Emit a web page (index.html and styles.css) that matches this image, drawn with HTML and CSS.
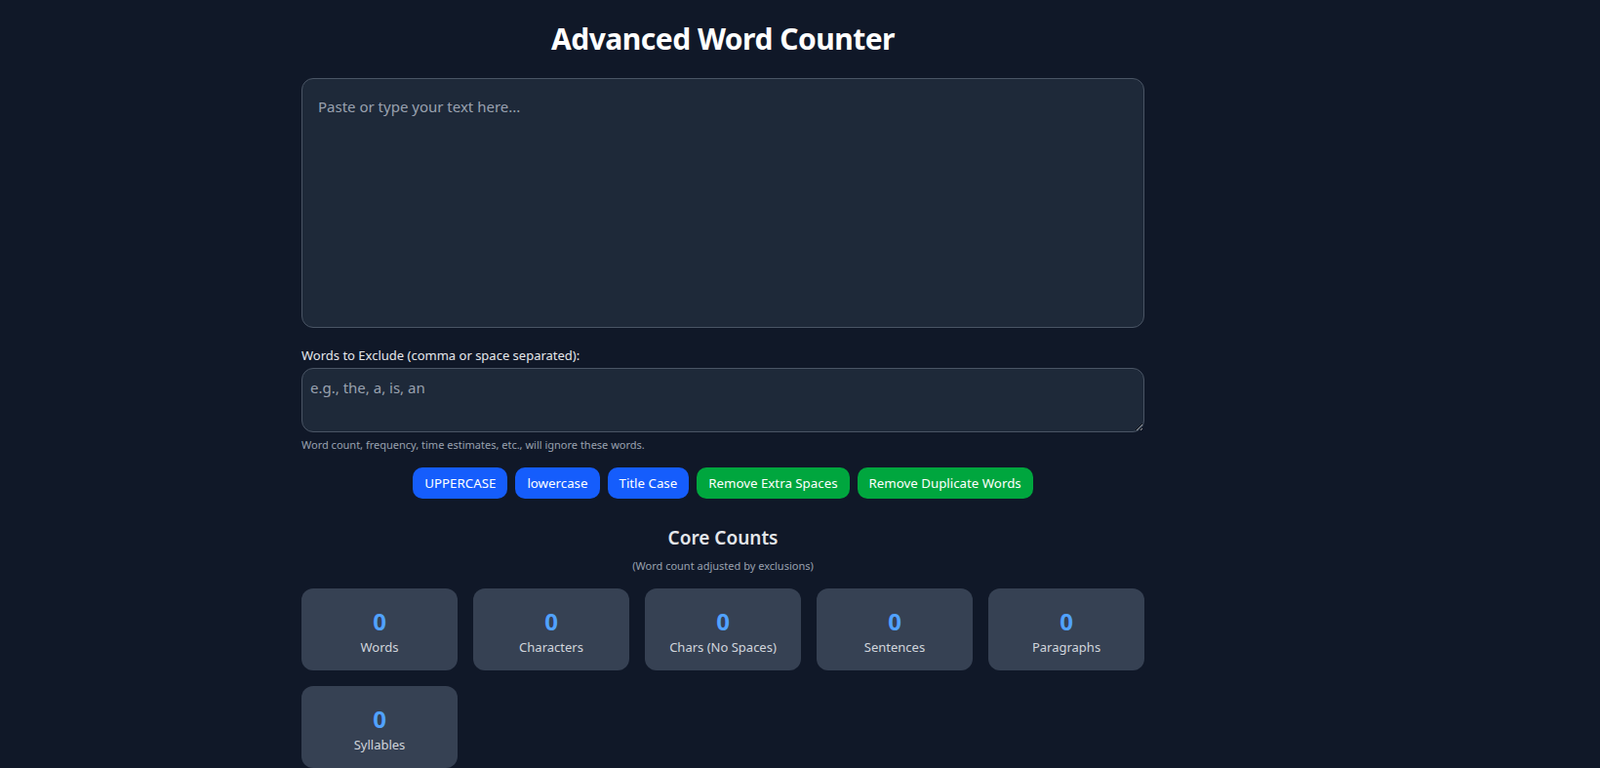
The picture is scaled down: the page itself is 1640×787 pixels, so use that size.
FILE: index.html
```html
<!DOCTYPE html>
<html lang="en">
<head>
<meta charset="utf-8">
<title>Advanced Word Counter</title>
<link rel="stylesheet" href="styles.css">
</head>
<body>
<div class="page">
  <main class="container">
    <h1 class="title">Advanced Word Counter</h1>
    <textarea class="main-input" placeholder="Paste or type your text here..."></textarea>
    <div class="exclude">
      <label class="exclude-label" for="exclude">Words to Exclude (comma or space separated):</label>
      <textarea id="exclude" class="exclude-input" rows="2" placeholder="e.g., the, a, is, an"></textarea>
      <p class="hint">Word count, frequency, time estimates, etc., will ignore these words.</p>
    </div>
    <div class="actions">
      <button class="btn btn-blue">UPPERCASE</button>
      <button class="btn btn-blue">lowercase</button>
      <button class="btn btn-blue">Title Case</button>
      <button class="btn btn-green">Remove Extra Spaces</button>
      <button class="btn btn-green">Remove Duplicate Words</button>
    </div>
    <section class="core">
      <h2 class="section-title">Core Counts</h2>
      <p class="section-sub">(Word count adjusted by exclusions)</p>
      <div class="grid">
        <div class="card"><div class="num">0</div><div class="label">Words</div></div>
        <div class="card"><div class="num">0</div><div class="label">Characters</div></div>
        <div class="card"><div class="num">0</div><div class="label">Chars (No Spaces)</div></div>
        <div class="card"><div class="num">0</div><div class="label">Sentences</div></div>
        <div class="card"><div class="num">0</div><div class="label">Paragraphs</div></div>
        <div class="card"><div class="num">0</div><div class="label">Syllables</div></div>
      </div>
    </section>
  </main>
</div>
</body>
</html>
```

FILE: styles.css
```css
* { box-sizing: border-box; }
html, body {
  margin: 0;
  padding: 0;
  background: #101828;
  color: #e5e7eb;
  font-family: "Noto Sans", "Open Sans", sans-serif;
}
.page {
  padding-left: 309px;
  padding-top: 22px;
}
.container {
  width: 864px;
}
.title {
  margin: 0 0 22px;
  font-size: 30px;
  line-height: 36px;
  font-weight: 700;
  text-align: center;
  color: #ffffff;
  letter-spacing: -0.5px;
}
.main-input {
  display: block;
  width: 100%;
  height: 256px;
  margin: 0;
  padding: 16px 16px;
  background: #1e2939;
  border: 1px solid #4a5565;
  border-radius: 12px;
  color: #e5e7eb;
  font-family: inherit;
  font-size: 15px;
  line-height: 24px;
  resize: none;
  outline: none;
}
.main-input::placeholder,
.exclude-input::placeholder { color: #99a1af; opacity: 1; }
.exclude {
  margin-top: 18px;
}
.exclude-label {
  display: block;
  font-size: 13px;
  line-height: 20px;
  color: #e5e7eb;
  margin-bottom: 3px;
}
.exclude-input {
  display: block;
  width: 100%;
  height: 66px;
  margin: 0;
  padding: 7px 8px 8px;
  background: #1e2939;
  border: 1px solid #4a5565;
  border-radius: 12px;
  color: #e5e7eb;
  font-family: inherit;
  font-size: 15px;
  line-height: 24px;
  outline: none;
}
.hint {
  margin: 5px 0 0;
  font-size: 11px;
  line-height: 16px;
  color: #99a1af;
}
.actions {
  margin-top: 15px;
  display: flex;
  justify-content: center;
  gap: 8px;
}
.btn {
  height: 32px;
  padding: 0 12px;
  border: none;
  border-radius: 10px;
  color: #ffffff;
  font-family: inherit;
  font-size: 13.3px;
  line-height: 20px;
}
.btn-blue { background: #155dfc; }
.btn-green { background: #00a63e; }
.core {
  margin-top: 26px;
}
.section-title {
  margin: 0 0 7px;
  font-size: 19px;
  line-height: 28px;
  font-weight: 600;
  text-align: center;
  color: #e5e7eb;
}
.section-sub {
  margin: 0 0 15px;
  font-size: 11px;
  line-height: 16px;
  text-align: center;
  color: #99a1af;
}
.grid {
  display: grid;
  grid-template-columns: repeat(5, 1fr);
  gap: 16px;
}
.card {
  background: #364153;
  border-radius: 12px;
  padding: 18px 16px 14px;
  text-align: center;
}
.num {
  font-size: 24px;
  line-height: 32px;
  font-weight: 700;
  color: #51a2ff;
}
.label {
  font-size: 13px;
  line-height: 20px;
  color: #d1d5dc;
}
```
